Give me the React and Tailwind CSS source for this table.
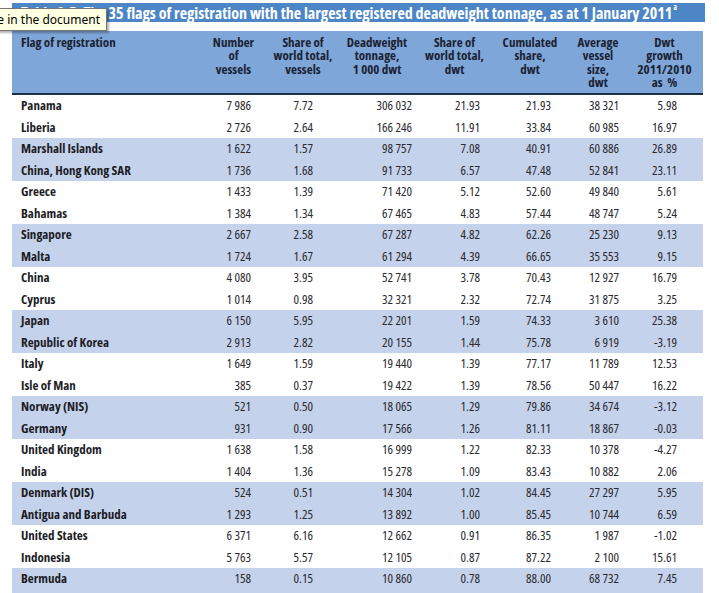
import React from 'react';

// Table rows: flag, vessels, share vessels, dwt, share dwt, cumulated, avg size, growth
const ROWS = [
  ['Panama', '7 986', '7.72', '306 032', '21.93', '21.93', '38 321', '5.98'],
  ['Liberia', '2 726', '2.64', '166 246', '11.91', '33.84', '60 985', '16.97'],
  ['Marshall Islands', '1 622', '1.57', '98 757', '7.08', '40.91', '60 886', '26.89'],
  ['China, Hong Kong SAR', '1 736', '1.68', '91 733', '6.57', '47.48', '52 841', '23.11'],
  ['Greece', '1 433', '1.39', '71 420', '5.12', '52.60', '49 840', '5.61'],
  ['Bahamas', '1 384', '1.34', '67 465', '4.83', '57.44', '48 747', '5.24'],
  ['Singapore', '2 667', '2.58', '67 287', '4.82', '62.26', '25 230', '9.13'],
  ['Malta', '1 724', '1.67', '61 294', '4.39', '66.65', '35 553', '9.15'],
  ['China', '4 080', '3.95', '52 741', '3.78', '70.43', '12 927', '16.79'],
  ['Cyprus', '1 014', '0.98', '32 321', '2.32', '72.74', '31 875', '3.25'],
  ['Japan', '6 150', '5.95', '22 201', '1.59', '74.33', '3 610', '25.38'],
  ['Republic of Korea', '2 913', '2.82', '20 155', '1.44', '75.78', '6 919', '-3.19'],
  ['Italy', '1 649', '1.59', '19 440', '1.39', '77.17', '11 789', '12.53'],
  ['Isle of Man', '385', '0.37', '19 422', '1.39', '78.56', '50 447', '16.22'],
  ['Norway (NIS)', '521', '0.50', '18 065', '1.29', '79.86', '34 674', '-3.12'],
  ['Germany', '931', '0.90', '17 566', '1.26', '81.11', '18 867', '-0.03'],
  ['United Kingdom', '1 638', '1.58', '16 999', '1.22', '82.33', '10 378', '-4.27'],
  ['India', '1 404', '1.36', '15 278', '1.09', '83.43', '10 882', '2.06'],
  ['Denmark (DIS)', '524', '0.51', '14 304', '1.02', '84.45', '27 297', '5.95'],
  ['Antigua and Barbuda', '1 293', '1.25', '13 892', '1.00', '85.45', '10 744', '6.59'],
  ['United States', '6 371', '6.16', '12 662', '0.91', '86.35', '1 987', '-1.02'],
  ['Indonesia', '5 763', '5.57', '12 105', '0.87', '87.22', '2 100', '15.61'],
  ['Bermuda', '158', '0.15', '10 860', '0.78', '88.00', '68 732', '7.45'],
  ['', '', '', '', '', '', '', ''],
];

const NUM_W = ['w-[51px]', 'w-[62px]', 'w-[99px]', 'w-[68px]', 'w-[71px]', 'w-[68px]', 'w-[58px]'];

const HEADERS = [
  { w: 'w-[67px]', lines: ['Number', 'of', 'vessels'] },
  { w: 'w-[72px]', lines: ['Share of', 'world total,', 'vessels'] },
  { w: 'w-[76px]', lines: ['Deadweight', 'tonnage,', '1 000 dwt'] },
  { w: 'w-[79px]', lines: ['Share of', 'world total,', 'dwt'] },
  { w: 'w-[72px]', lines: ['Cumulated', 'share,', 'dwt'] },
  { w: 'w-[64px]', lines: ['Average', 'vessel', 'size,', 'dwt'] },
  { w: 'w-[69px]', lines: ['Dwt', 'growth', '2011/2010', 'as  %'] },
];

// condensed face: Open Sans variable width axis
const cond = { fontFamily: '"Open Sans", sans-serif', fontStretch: '75%' };
const numFace = { fontStretch: '87.5%' };

export default function App() {
  return (
    <div className="relative min-h-screen bg-white pl-[12px] pt-[3px]" style={cond}>
      {/* Title */}
      <div className="w-[693px] h-[19px] bg-[#4c86c7] pl-[9px] flex items-center text-white font-bold text-[16px] whitespace-nowrap overflow-hidden">
        Table 2.5: The 35 flags of registration with the largest registered deadweight tonnage, as at 1 January 2011
        <sup className="text-[8px] ml-[1px] -translate-y-[2px]">a</sup>
      </div>

      {/* Header */}
      <div className="mt-[9px] w-[691px] h-[64px] bg-[#7ea6d8] border-b-2 border-[#1c2e46] flex pt-[5px] text-[13px] leading-[13.4px] font-bold text-[#1b2233]">
        <div className="w-[188px] pl-[9px]">Flag of registration</div>
        {HEADERS.map((h, i) => (
          <div key={i} className={`${h.w} text-center`}>
            {h.lines.map((l, j) => (
              <div key={j} className="whitespace-pre">{l}</div>
            ))}
          </div>
        ))}
      </div>

      {/* Body */}
      <div className="w-[691px]">
        {ROWS.map((r, i) => {
          const shaded = Math.floor(i / 2) % 2 === 1;
          return (
            <div
              key={i}
              className={`flex items-center h-[21.5px] text-[13px] ${shaded ? 'bg-[#c5d2eb]' : 'bg-white'}`}
            >
              <div className="w-[188px] pl-[9px] font-bold text-[#1d1d26]">{r[0]}</div>
              {r.slice(1).map((v, j) => (
                <div key={j} className={`${NUM_W[j]} text-right text-[#2a2a30]`} style={numFace}>{v}</div>
              ))}
            </div>
          );
        })}
      </div>

      {/* Tooltip */}
      <div
        className="absolute left-[-4px] top-[8px] h-[23px] w-[111px] bg-[#ffffe1] border border-[#767676] shadow-[2px_2px_2px_rgba(0,0,0,0.3)] flex items-center justify-end pr-[6px] text-[12px] text-black whitespace-nowrap"
        style={{ fontFamily: '"Noto Sans", "DejaVu Sans", sans-serif', fontStretch: '100%' }}
      >
        e in the document
      </div>
    </div>
  );
}
